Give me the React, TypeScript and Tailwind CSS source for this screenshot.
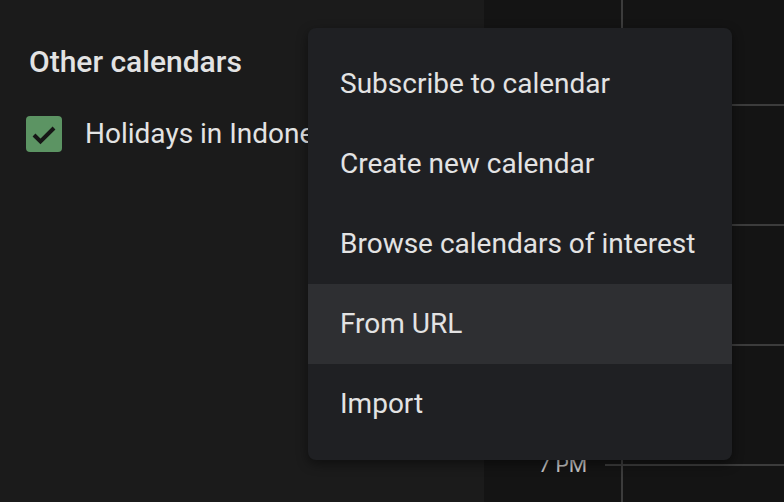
import React from 'react';

// only the last label shows; the others sit under the menu
const hours = ['', '', '', '7 PM'];
const menuItems = ['Subscribe to calendar', 'Create new calendar', 'Browse calendars of interest', 'From URL', 'Import'];

export default function App() {
  return (
    <div
      className="relative flex h-[502px] w-[784px] overflow-hidden bg-[#1b1b1b] text-[#e3e3e3]"
      style={{ fontFamily: 'Roboto, "Open Sans", sans-serif' }}
    >
      {/* sidebar */}
      <aside className="w-[484px] shrink-0 pl-[26px] pt-[44px]">
        <h2 className="pl-[3px] text-[30px] leading-[36px] font-medium text-[#e3e3e3]">Other calendars</h2>
        <div className="mt-[36px] flex items-center gap-[23px] whitespace-nowrap">
          <span className="flex h-[36px] w-[36px] items-center justify-center rounded-[4px] bg-[#5c9463]">
            <svg viewBox="0 0 36 36" className="h-[36px] w-[36px]" fill="none" stroke="#161616" strokeWidth="4">
              <path d="M8 19l6.5 6.5L28 12" />
            </svg>
          </span>
          <span className="text-[28px] leading-[36px]">Holidays in Indonesia</span>
        </div>
      </aside>

      {/* day grid */}
      <main className="flex flex-1 flex-col bg-[#141414]">
        <div className="flex h-[104px] shrink-0">
          <div className="w-[137px] shrink-0" />
          <div className="flex-1 border-l-2 border-[#3c3c3c]" />
        </div>
        {hours.map((h, i) => (
          <div key={i} className="flex h-[120px] shrink-0">
            <div className="relative w-[137px] shrink-0">
              {h && (
                <span className="absolute right-[34px] top-[1px] -translate-y-1/2 text-[21px] leading-none text-[#c4c4c4]">
                  {h}
                </span>
              )}
              <span className="absolute right-0 top-0 h-[2px] w-[16px] bg-[#3c3c3c]" />
            </div>
            <div className="flex-1 border-l-2 border-t-2 border-[#3c3c3c]" />
          </div>
        ))}
      </main>

      {/* dropdown menu */}
      <div className="absolute left-[308px] top-[28px] w-[424px] rounded-[8px] bg-[#1f2023] py-[16px] shadow-[0_4px_12px_rgba(0,0,0,0.45)]">
        {menuItems.map((item) => (
          <div
            key={item}
            className={`flex h-[80px] items-center whitespace-nowrap px-[32px] text-[28px] text-[#e3e3e3] ${item === 'From URL' ? 'bg-[#2e2f32]' : ''}`}
          >
            {item}
          </div>
        ))}
      </div>
    </div>
  );
}
